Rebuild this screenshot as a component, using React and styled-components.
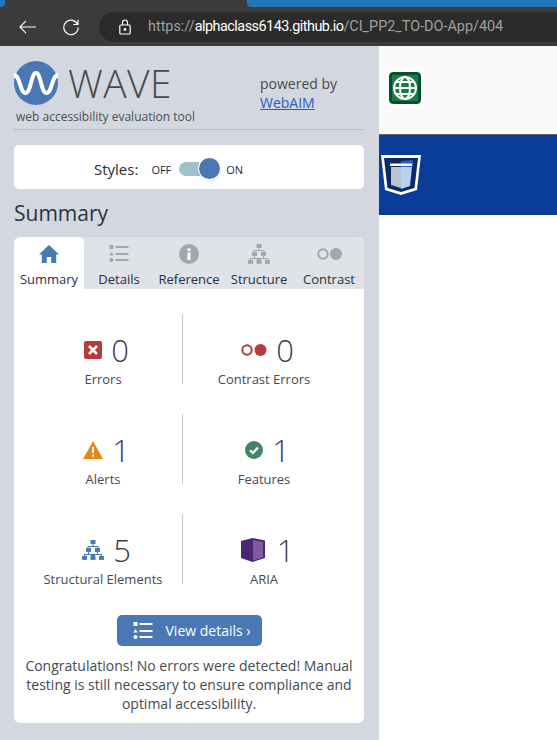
import styled, { createGlobalStyle } from "styled-components";

const BLUE = "#4a78b5";
const GREY = "#a3a6ab";

const GlobalStyle = createGlobalStyle`
  html, body {
    margin: 0;
    padding: 0;
    background: #fff;
  }
  * {
    box-sizing: border-box;
  }
`;

const Page = styled.div`
  width: 557px;
  height: 740px;
  display: flex;
  overflow: hidden;
  flex-direction: column;
  font-family: "Open Sans", sans-serif;
`;

const TabStrip = styled.div`
  height: 7px;
  flex: none;
  display: flex;
  justify-content: space-between;
  background-color: #3b3b3b;
`;

const BrowserTab = styled.div`
  width: ${({ $width }) => $width}px;
  border-radius: ${({ $end }) => ($end ? "0 0 0 4px" : "0 0 4px 0")};
  background-color: #2275b8;
`;

const Toolbar = styled.div`
  height: 39px;
  flex: none;
  display: flex;
  align-items: center;
  padding-left: 17px;
  background-color: #3b3b3b;
`;

const NavButton = styled.div`
  width: 20px;
  height: 20px;
  display: flex;
  margin-right: 24px;
  align-items: center;
  justify-content: center;
`;

const AddressBar = styled.div`
  flex: 1;
  height: 30px;
  display: flex;
  margin-left: -6px;
  align-items: center;
  padding-left: 20px;
  border-radius: 15px 0 0 15px;
  background-color: #2b2b2b;
`;

const Url = styled.div`
  margin-left: 17px;
  font-family: Roboto, sans-serif;
  font-size: 14.4px;
  white-space: nowrap;
  color: #a0a0a0;

  b {
    color: #fff;
    font-weight: 400;
    letter-spacing: -0.5px;
  }
`;

const Main = styled.div`
  flex: 1;
  display: flex;
  min-height: 0;
`;

const Sidebar = styled.div`
  width: 379px;
  flex: none;
  display: flex;
  padding: 14px 15px 0 14px;
  flex-direction: column;
  background-color: #d3d8e0;
`;

const Brand = styled.div`
  height: 70px;
  display: flex;
  border-bottom: 1px solid #b5b8bd;
`;

const LogoBlock = styled.div`
  width: 246px;
  flex: none;
  display: flex;
  flex-direction: column;
`;

const LogoRow = styled.div`
  height: 44px;
  display: flex;
  margin-top: 1px;
  align-items: center;
`;

const Wordmark = styled.div`
  margin-left: 10px;
  font-size: 39px;
  font-weight: 300;
  line-height: 44px;
  letter-spacing: 0.4px;
  color: #4a4a4a;
`;

const Tagline = styled.div`
  margin: 5px 0 0 2px;
  font-size: 12px;
  line-height: 14px;
  white-space: nowrap;
  color: #4f4f4f;
`;

const Powered = styled.div`
  padding-top: 14px;
  font-size: 14px;
  line-height: 19px;
  color: #4a4a4a;

  a {
    display: block;
    color: #2a5cc4;
    text-decoration: underline;
  }
`;

const StylesCard = styled.div`
  height: 44px;
  display: flex;
  margin-top: 15px;
  padding: 4px 0 0 80px;
  align-items: center;
  border-radius: 5px;
  background-color: #fff;
`;

const StylesLabel = styled.span`
  font-size: 15px;
  margin-right: 13px;
  color: #2b2b2b;
`;

const SwitchText = styled.span`
  font-size: 11px;
  color: #1e2a40;
`;

const Track = styled.div`
  width: 40px;
  height: 14px;
  position: relative;
  margin: 0 7px 0 8px;
  border-radius: 7px;
  background-color: #a0c1cb;
`;

const Knob = styled.div`
  top: -4px;
  right: -1px;
  width: 21px;
  height: 21px;
  position: absolute;
  border-radius: 50%;
  background-color: ${BLUE};
  box-shadow: 0 0 0 1px #fff, 0 1px 2px rgba(0, 0, 0, 0.4);
`;

const Heading = styled.h2`
  margin: 8px 0;
  font-size: 21px;
  font-weight: 400;
  line-height: 32px;
  color: #2b3340;
`;

const Card = styled.div`
  display: flex;
  height: 486px;
  overflow: hidden;
  flex-direction: column;
  border-radius: 6px;
  background-color: #fff;
`;

const Tabs = styled.div`
  height: 52px;
  flex: none;
  display: flex;
  background-color: #dfe2e7;
`;

const Tab = styled.div`
  flex: 1;
  display: flex;
  padding-top: 6px;
  align-items: center;
  flex-direction: column;
  border-radius: 6px 6px 0 0;
  background-color: ${({ $active }) => ($active ? "#fff" : "transparent")};
`;

const TabIcon = styled.div`
  height: 22px;
  display: flex;
  align-items: center;
  justify-content: center;
`;

const TabLabel = styled.div`
  margin-top: 6px;
  font-size: 13px;
  line-height: 16px;
  white-space: nowrap;
  color: #2a3040;
`;

const StatGrid = styled.div`
  display: grid;
  row-gap: 30px;
  margin: 25px 19px 0 10px;
  grid-template-columns: 158px 163px;
`;

const Stat = styled.div`
  height: 70px;
  display: flex;
  align-items: center;
  flex-direction: column;
  border-left: ${({ $divided }) => ($divided ? "1px solid #c9c9c9" : "none")};
`;

const StatTop = styled.div`
  height: 40px;
  display: flex;
  margin: 16px 0 1px;
  padding-left: 7px;
  align-items: center;
  column-gap: ${({ $gap }) => $gap || 9}px;
`;

const StatNumber = styled.div`
  font-size: 31px;
  font-weight: 300;
  line-height: 40px;
  color: #3c4046;
`;

const StatLabel = styled.div`
  font-size: 13px;
  line-height: 16px;
  white-space: nowrap;
  color: #46494f;
`;

const DetailsButton = styled.div`
  width: 145px;
  height: 31px;
  display: flex;
  flex: none;
  column-gap: 13px;
  margin: 31px auto 0;
  padding-left: 16px;
  align-items: center;
  border-radius: 5px;
  font-size: 14px;
  color: #fff;
  background-color: ${BLUE};
`;

const Note = styled.p`
  margin: 10px 0 0;
  padding: 0 6px;
  font-size: 14px;
  line-height: 19px;
  text-align: center;
  color: #464a50;
`;

const Site = styled.div`
  flex: 1;
  display: flex;
  flex-direction: column;
  background-color: #fff;
`;

const SiteHeader = styled.div`
  height: 89px;
  display: flex;
  padding: 26px 0 0 10px;
  background-color: #fafafa;
  border-bottom: 1px solid #666;
`;

const SiteBanner = styled.div`
  height: 80px;
  display: flex;
  padding: 19px 0 0 1px;
  background-color: #0a3d99;
`;

const GlobeBadge = styled.svg`
  border-radius: 4px;
  box-shadow: 0 0 0 3px #fff;
`;

const Hierarchy = ({ color, size = 22 }) => (
  <svg width={size} height={size * 0.95} viewBox="0 0 22 21" fill={color}>
    <rect x="8.5" y="0" width="5" height="4" />
    <rect x="4" y="8" width="5" height="4" />
    <rect x="13" y="8" width="5" height="4" />
    <rect x="0" y="16" width="5" height="4" />
    <rect x="8.5" y="16" width="5" height="4" />
    <rect x="17" y="16" width="5" height="4" />
    <path d="M10.500 4h1v2h5v2h-1V7h-9v1h-1V6h5zM6 12h1v2h8v-2h1v2h4v2h-1v-1h-6v1h-4v-1H3v1H2v-2h4z" />
  </svg>
);

const ListIcon = ({ color, size = 20 }) => (
  <svg width={size} height={size} viewBox="0 0 20 20" fill={color}>
    <rect x="0.500" y="1" width="4" height="4" rx="0.500" />
    <path d="M2.500 8l2.200 3.500H0.300z" />
    <circle cx="2.500" cy="16" r="2" />
    <rect x="6.500" y="2" width="13" height="2" />
    <rect x="6.500" y="9" width="13" height="2" />
    <rect x="6.500" y="15" width="13" height="2" />
  </svg>
);

const App = () => (
  <>
    <GlobalStyle />
    <Page>
      <TabStrip>
        <BrowserTab $width={5} />
        <BrowserTab $width={310} $end />
      </TabStrip>
      <Toolbar>
        <NavButton>
          <svg width="17" height="14" viewBox="0 0 17 14" fill="none" stroke="#fff" strokeWidth="1.100">
            <path d="M17 7H1M7 .8 .9 7 7 13.200" />
          </svg>
        </NavButton>
        <NavButton>
          <svg width="18" height="18" viewBox="0 0 18 18" fill="none" stroke="#fff" strokeWidth="1.200">
            <path d="M15.800 7A7.200 7.200 0 1 0 16.200 9.500M16 1.800V6.500h-4.700" />
          </svg>
        </NavButton>
        <AddressBar>
          <svg width="12" height="16" viewBox="0 0 12 16" fill="none" stroke="#fff" strokeWidth="1.200">
            <rect x="0.800" y="6" width="10.400" height="9" rx="1" />
            <path d="M3.500 6V3.500a2.500 2.500 0 0 1 5 0V6" />
            <circle cx="6" cy="10.500" r="0.800" fill="#fff" />
          </svg>
          <Url>
            https://<b>alphaclass6143.github.io</b>/CI_PP2_TO-DO-App/404
          </Url>
        </AddressBar>
      </Toolbar>
      <Main>
        <Sidebar>
          <Brand>
            <LogoBlock>
              <LogoRow>
                <svg width="44" height="44" viewBox="0 0 44 44">
                  <circle cx="22" cy="22" r="22" fill={BLUE} />
                  <path
                    d="M0 14C6 14 6 32 11.500 32S17 12 22 12s5 20 10.500 20S38 14 44 14"
                    fill="none"
                    stroke="#fff"
                    strokeWidth="4"
                  />
                </svg>
                <Wordmark>WAVE</Wordmark>
              </LogoRow>
              <Tagline>web accessibility evaluation tool</Tagline>
            </LogoBlock>
            <Powered>
              powered by
              <a href="#webaim">WebAIM</a>
            </Powered>
          </Brand>
          <StylesCard>
            <StylesLabel>Styles:</StylesLabel>
            <SwitchText>OFF</SwitchText>
            <Track>
              <Knob />
            </Track>
            <SwitchText>ON</SwitchText>
          </StylesCard>
          <Heading>Summary</Heading>
          <Card>
            <Tabs>
              <Tab $active>
                <TabIcon>
                  <svg width="20" height="18" viewBox="0 0 20 18" fill={BLUE}>
                    <path d="M10 0 20 9.500h-2.800V18h-5v-6H7.800v6h-5V9.500H0z" />
                  </svg>
                </TabIcon>
                <TabLabel>Summary</TabLabel>
              </Tab>
              <Tab>
                <TabIcon>
                  <ListIcon color={GREY} />
                </TabIcon>
                <TabLabel>Details</TabLabel>
              </Tab>
              <Tab>
                <TabIcon>
                  <svg width="20" height="20" viewBox="0 0 20 20">
                    <circle cx="10" cy="10" r="10" fill={GREY} />
                    <rect x="8.500" y="8.500" width="3" height="7.500" fill="#fff" />
                    <rect x="8.500" y="4.500" width="3" height="2.500" fill="#fff" />
                  </svg>
                </TabIcon>
                <TabLabel>Reference</TabLabel>
              </Tab>
              <Tab>
                <TabIcon>
                  <Hierarchy color={GREY} />
                </TabIcon>
                <TabLabel>Structure</TabLabel>
              </Tab>
              <Tab>
                <TabIcon>
                  <svg width="25" height="12" viewBox="0 0 25 12">
                    <circle cx="6" cy="6" r="4.700" fill="none" stroke={GREY} strokeWidth="2" />
                    <circle cx="19" cy="6" r="6" fill={GREY} />
                  </svg>
                </TabIcon>
                <TabLabel>Contrast</TabLabel>
              </Tab>
            </Tabs>
            <StatGrid>
              <Stat>
                <StatTop>
                  <svg width="18" height="18" viewBox="0 0 18 18">
                    <rect width="18" height="18" rx="2" fill="#b93a3a" />
                    <path d="M5 5l8 8M13 5l-8 8" stroke="#fff" strokeWidth="2.600" />
                  </svg>
                  <StatNumber>0</StatNumber>
                </StatTop>
                <StatLabel>Errors</StatLabel>
              </Stat>
              <Stat $divided>
                <StatTop>
                  <svg width="26" height="12" viewBox="0 0 26 12">
                    <circle cx="6" cy="6" r="4.700" fill="none" stroke="#b93a3a" strokeWidth="2" />
                    <circle cx="19.500" cy="6" r="6" fill="#b93a3a" />
                  </svg>
                  <StatNumber>0</StatNumber>
                </StatTop>
                <StatLabel>Contrast Errors</StatLabel>
              </Stat>
              <Stat>
                <StatTop>
                  <svg width="20" height="18" viewBox="0 0 20 18">
                    <path d="M10 0 20 18H0z" fill="#e28a17" />
                    <rect x="9" y="6" width="2" height="6" fill="#fff" />
                    <rect x="9" y="13.500" width="2" height="2" fill="#fff" />
                  </svg>
                  <StatNumber>1</StatNumber>
                </StatTop>
                <StatLabel>Alerts</StatLabel>
              </Stat>
              <Stat $divided>
                <StatTop>
                  <svg width="18" height="18" viewBox="0 0 18 18">
                    <circle cx="9" cy="9" r="9" fill="#448464" />
                    <path d="M5 9.200l3 2.800 5-5.500" fill="none" stroke="#fff" strokeWidth="2.200" />
                  </svg>
                  <StatNumber>1</StatNumber>
                </StatTop>
                <StatLabel>Features</StatLabel>
              </Stat>
              <Stat>
                <StatTop>
                  <Hierarchy color={BLUE} />
                  <StatNumber>5</StatNumber>
                </StatTop>
                <StatLabel>Structural Elements</StatLabel>
              </Stat>
              <Stat $divided>
                <StatTop $gap={12}>
                  <svg width="24" height="24" viewBox="0 0 24 24">
                    <path d="M0 3 11.500 0 24 2.500V20L11.500 24 0 20z" fill="#4b2673" />
                    <path d="M12 2l10 2v15.500L12 22.500z" fill="#7c5c9e" />
                  </svg>
                  <StatNumber>1</StatNumber>
                </StatTop>
                <StatLabel>ARIA</StatLabel>
              </Stat>
            </StatGrid>
            <DetailsButton>
              <ListIcon color="#fff" />
              View details ›
            </DetailsButton>
            <Note>
              Congratulations! No errors were detected! Manual testing is still
              necessary to ensure compliance and optimal accessibility.
            </Note>
          </Card>
        </Sidebar>
        <Site>
          <SiteHeader>
            <GlobeBadge width="32" height="32" viewBox="0 0 32 32">
              <rect width="32" height="32" rx="4" fill="#04522c" />
              <rect x="3" y="3" width="26" height="26" fill="#1c7a47" />
              <g fill="none" stroke="#fff" strokeWidth="2">
                <circle cx="16" cy="16" r="11" />
                <ellipse cx="16" cy="16" rx="5" ry="11" />
                <path d="M5 16h22M7 10h18M7 22h18" />
              </g>
            </GlobeBadge>
          </SiteHeader>
          <SiteBanner>
            <svg width="42" height="42" viewBox="0 0 42 42">
              <path d="M1 1h40l-4 35-16 5-16-5z" fill="#fff" />
              <path d="M4 4h34l-3.500 30L21 38 7.500 34z" fill="#0b2a63" />
              <path d="M11 13h10v21l-10-3z" fill="#b9c3d4" />
              <path d="M21 7l12-1v7H21z" fill="#1d63c4" />
              <path d="M21 13h11l-2 19-9 3z" fill="#b8d1f0" />
              <rect x="10" y="9.500" width="22" height="2.500" fill="#fff" />
            </svg>
          </SiteBanner>
        </Site>
      </Main>
    </Page>
  </>
);

export default App;
